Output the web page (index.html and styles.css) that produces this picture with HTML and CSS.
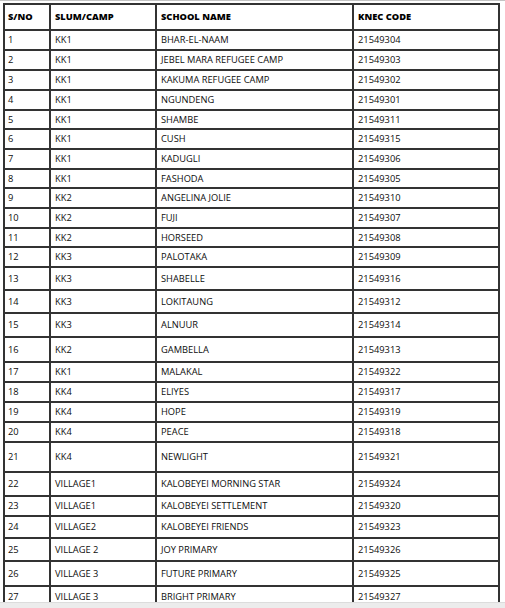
FILE: index.html
```html
<!DOCTYPE html>
<html>
<head>
<meta charset="utf-8">
<link rel="stylesheet" href="styles.css">
</head>
<body>
<div class="page">
  <div class="topline"></div>
  <div class="sheet">
    <table class="schools">
      <colgroup>
        <col class="c-no"><col class="c-camp"><col class="c-name"><col class="c-code">
      </colgroup>
      <thead>
        <tr class="head"><th>S/NO</th><th>SLUM/CAMP</th><th>SCHOOL NAME</th><th>KNEC CODE</th></tr>
      </thead>
      <tbody>
        <tr class="h20"><td>1</td><td>KK1</td><td>BHAR-EL-NAAM</td><td>21549304</td></tr>
        <tr class="h20"><td>2</td><td>KK1</td><td>JEBEL MARA REFUGEE CAMP</td><td>21549303</td></tr>
        <tr class="h20"><td>3</td><td>KK1</td><td>KAKUMA REFUGEE CAMP</td><td>21549302</td></tr>
        <tr class="h20"><td>4</td><td>KK1</td><td>NGUNDENG</td><td>21549301</td></tr>
        <tr class="h19"><td>5</td><td>KK1</td><td>SHAMBE</td><td>21549311</td></tr>
        <tr class="h20"><td>6</td><td>KK1</td><td>CUSH</td><td>21549315</td></tr>
        <tr class="h20"><td>7</td><td>KK1</td><td>KADUGLI</td><td>21549306</td></tr>
        <tr class="h19"><td>8</td><td>KK1</td><td>FASHODA</td><td>21549305</td></tr>
        <tr class="h20"><td>9</td><td>KK2</td><td>ANGELINA JOLIE</td><td>21549310</td></tr>
        <tr class="h20"><td>10</td><td>KK2</td><td>FUJI</td><td>21549307</td></tr>
        <tr class="h19"><td>11</td><td>KK2</td><td>HORSEED</td><td>21549308</td></tr>
        <tr class="h20"><td>12</td><td>KK3</td><td>PALOTAKA</td><td>21549309</td></tr>
        <tr class="h23"><td>13</td><td>KK3</td><td>SHABELLE</td><td>21549316</td></tr>
        <tr class="h23"><td>14</td><td>KK3</td><td>LOKITAUNG</td><td>21549312</td></tr>
        <tr class="h24"><td>15</td><td>KK3</td><td>ALNUUR</td><td>21549314</td></tr>
        <tr class="h25"><td>16</td><td>KK2</td><td>GAMBELLA</td><td>21549313</td></tr>
        <tr class="h20"><td>17</td><td>KK1</td><td>MALAKAL</td><td>21549322</td></tr>
        <tr class="h20"><td>18</td><td>KK4</td><td>ELIYES</td><td>21549317</td></tr>
        <tr class="h20"><td>19</td><td>KK4</td><td>HOPE</td><td>21549319</td></tr>
        <tr class="h20"><td>20</td><td>KK4</td><td>PEACE</td><td>21549318</td></tr>
        <tr class="h30"><td>21</td><td>KK4</td><td>NEWLIGHT</td><td>21549321</td></tr>
        <tr class="h24"><td>22</td><td>VILLAGE1</td><td>KALOBEYEI MORNING STAR</td><td>21549324</td></tr>
        <tr class="h20"><td>23</td><td>VILLAGE1</td><td>KALOBEYEI SETTLEMENT</td><td>21549320</td></tr>
        <tr class="h22"><td>24</td><td>VILLAGE2</td><td>KALOBEYEI FRIENDS</td><td>21549323</td></tr>
        <tr class="h23"><td>25</td><td>VILLAGE 2</td><td>JOY PRIMARY</td><td>21549326</td></tr>
        <tr class="h25"><td>26</td><td>VILLAGE 3</td><td>FUTURE PRIMARY</td><td>21549325</td></tr>
        <tr class="h22"><td>27</td><td>VILLAGE 3</td><td>BRIGHT PRIMARY</td><td>21549327</td></tr>
      </tbody>
    </table>
  </div>
  <div class="bottombar"></div>
</div>
</body>
</html>
```
FILE: styles.css
```css
html, body {
  margin: 0;
  padding: 0;
  background: #ffffff;
}

.page {
  width: 505px;
  height: 608px;
  display: flex;
  flex-direction: column;
  overflow: hidden;
  font-family: "Open Sans", "Noto Sans", "DejaVu Sans", sans-serif;
  color: #0d0d0d;
}

.topline {
  flex: 0 0 1px;
  background: #c4c4c4;
}

.sheet {
  flex: 1 1 auto;
  min-height: 0;
  overflow: hidden;
  padding: 2px 0 0 3px;
}

.schools {
  border-collapse: separate;
  border-spacing: 0;
  table-layout: fixed;
  width: 497px;
  border-top: 2px solid #333333;
  border-left: 2px solid #333333;
  font-size: 9.3px;
}

.c-no { width: 46px; }
.c-camp { width: 106px; }
.c-name { width: 197px; }
.c-code { width: 146px; }

.schools th,
.schools td {
  box-sizing: border-box;
  border-right: 2px solid #333333;
  border-bottom: 2px solid #333333;
  padding: 0 0 0 4px;
  text-align: left;
  vertical-align: middle;
  white-space: nowrap;
  line-height: 12px;
}

.schools th:first-child,
.schools td:first-child {
  padding-left: 3px;
}

.schools th {
  font-weight: 800;
  color: #000000;
}

.head { height: 26px; }
.h19 { height: 19px; }
.h20 { height: 20px; }
.h22 { height: 22px; }
.h23 { height: 23px; }
.h24 { height: 24px; }
.h25 { height: 25px; }
.h30 { height: 30px; }

.bottombar {
  flex: 0 0 5px;
  background: #ececec;
  border-top: 1px solid #dcdcdc;
}
```
